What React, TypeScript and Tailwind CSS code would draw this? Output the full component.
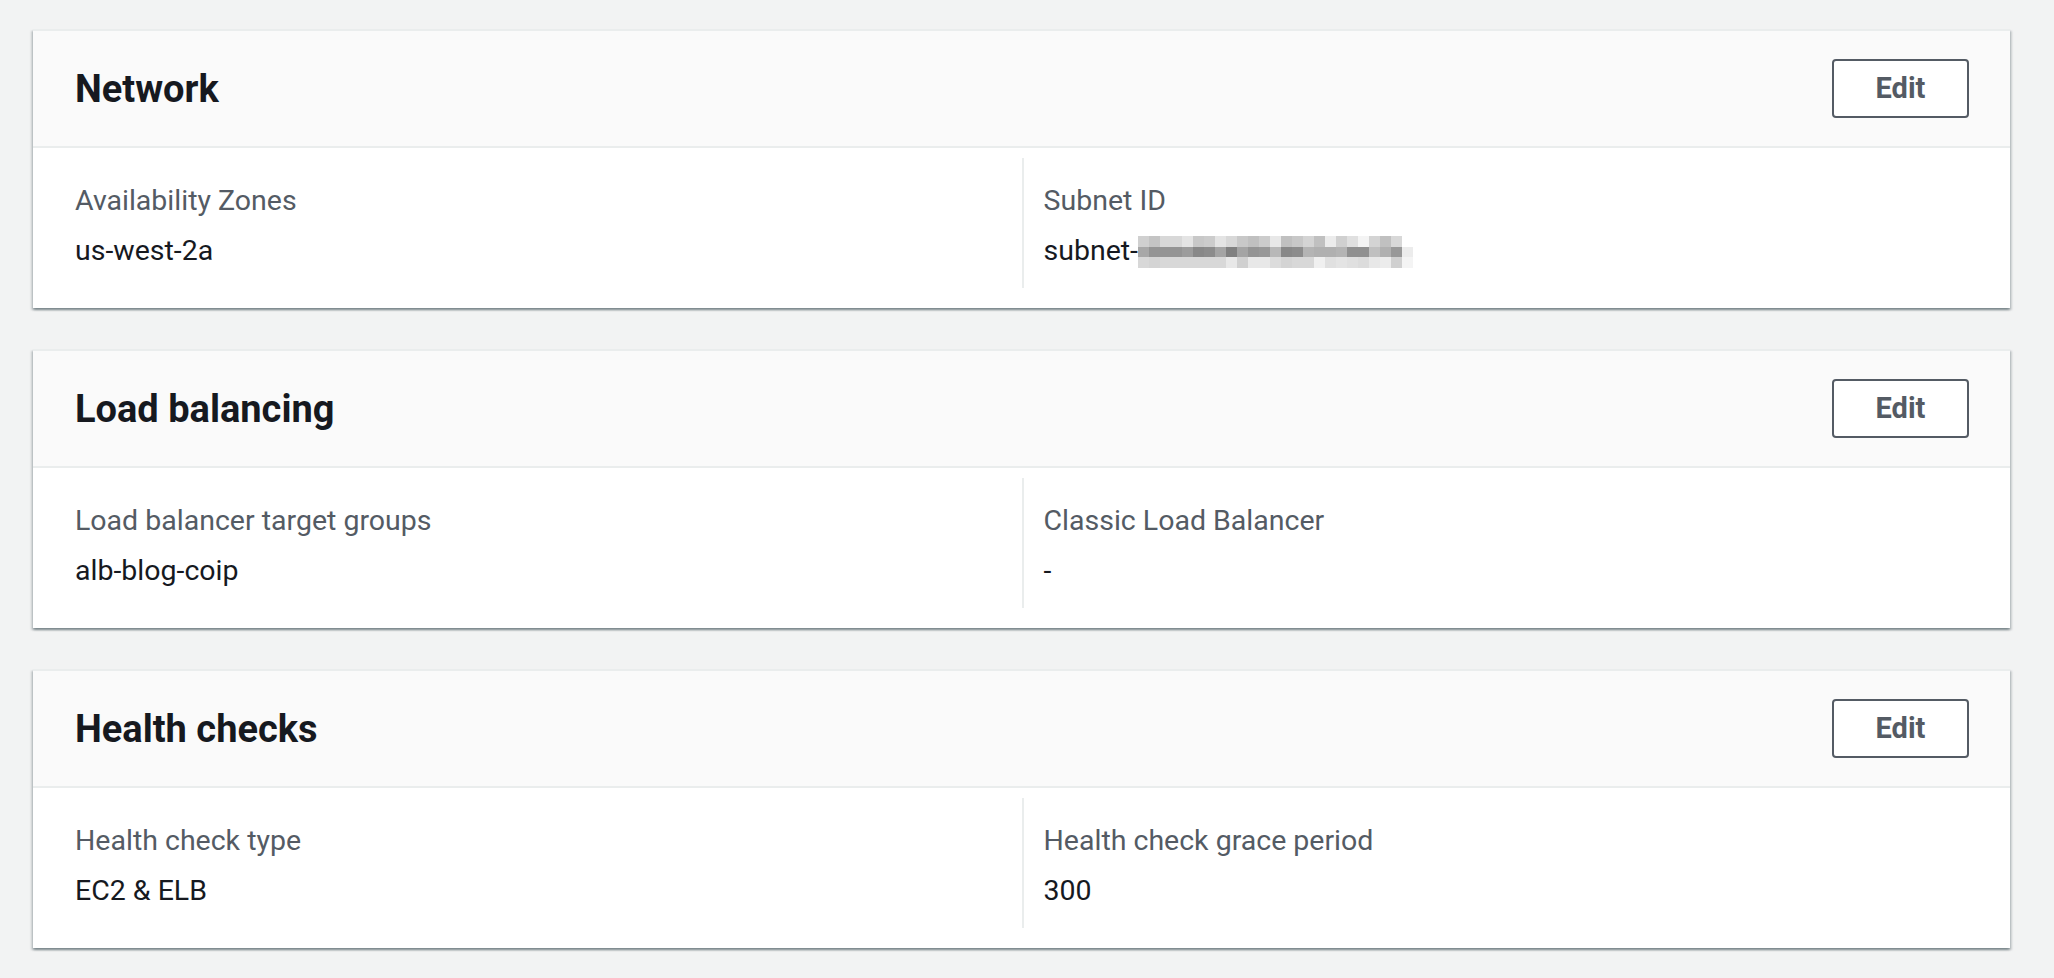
import React from "react";

type Field = { label: string; value: React.ReactNode };

type Section = { title: string; fields: [Field, Field] };

// blurred subnet id mosaic, one row per band of the pixelated image
const MOSAIC: string[][] = [
  ["d0", "c4", "d8", "d8", "e4", "c8", "cc", "e4", "d8", "c8", "c0", "cc", "e8", "c0", "c8", "d4", "c0", "ec", "d0", "e0", "f4", "d4", "c0", "d8", "ff"],
  ["a8", "94", "94", "94", "9c", "88", "8c", "a4", "80", "a4", "94", "98", "b8", "88", "8c", "b4", "b0", "b0", "b4", "90", "90", "c0", "b0", "98", "ec"],
  ["d8", "d4", "d8", "d8", "d8", "d8", "d8", "d8", "e8", "d0", "e8", "e8", "dc", "d4", "d8", "d8", "f0", "e0", "e4", "e0", "dc", "e8", "ec", "d0", "f4"],
];

const BlurredId: React.FC = () => (
  <span className="inline-flex flex-col align-top translate-y-[7px]">
    {MOSAIC.map((row, r) => (
      <span key={r} className="flex h-[10.6px]">
        {row.map((shade, c) => (
          <span
            key={c}
            className="w-[11px] h-full"
            style={{ backgroundColor: `#${shade}${shade}${shade}` }}
          />
        ))}
      </span>
    ))}
  </span>
);

const SECTIONS: Section[] = [
  {
    title: "Network",
    fields: [
      { label: "Availability Zones", value: "us-west-2a" },
      {
        label: "Subnet ID",
        value: (
          <>
            subnet-
            <BlurredId />
          </>
        ),
      },
    ],
  },
  {
    title: "Load balancing",
    fields: [
      { label: "Load balancer target groups", value: "alb-blog-coip" },
      { label: "Classic Load Balancer", value: "-" },
    ],
  },
  {
    title: "Health checks",
    fields: [
      { label: "Health check type", value: "EC2 & ELB" },
      { label: "Health check grace period", value: "300" },
    ],
  },
];

const FieldBlock: React.FC<{ field: Field }> = ({ field }) => (
  <div>
    <div className="text-[28.5px] leading-[44px] text-[#545b64] mb-[6px]">{field.label}</div>
    <div className="text-[28.5px] leading-[44px] text-[#16191f] whitespace-nowrap">{field.value}</div>
  </div>
);

const Card: React.FC<{ section: Section }> = ({ section }) => (
  <div className="bg-white border-t-2 border-[#eaeded] shadow-[0_2px_2px_0_rgba(0,28,36,0.3),2px_2px_2px_0_rgba(0,28,36,0.15),-2px_2px_2px_0_rgba(0,28,36,0.15)]">
    <div className="h-[117px] bg-[#fafafa] border-b-2 border-[#eaeded] flex items-center justify-between pl-[42px] pr-[41px]">
      <h2 className="text-[38px] leading-[44px] font-bold text-[#16191f]">{section.title}</h2>
      <button
        type="button"
        className="w-[137px] h-[59px] border-2 border-[#545b64] rounded-[4px] bg-white text-[29px] font-bold text-[#545b64] flex items-center justify-center"
      >
        Edit
      </button>
    </div>
    <div className="grid grid-cols-2 pt-[10px] pb-[20px]">
      <div className="pl-[42px] pr-[20px] pt-[21px] pb-[15px]">
        <FieldBlock field={section.fields[0]} />
      </div>
      <div className="border-l-2 border-[#eaeded] pl-[20px] pr-[20px] pt-[21px] pb-[15px]">
        <FieldBlock field={section.fields[1]} />
      </div>
    </div>
  </div>
);

const App: React.FC = () => {
  return (
    <div className="min-h-screen bg-[#f2f3f3] pl-[33px] pr-[44px] pt-[29px] pb-[30px] flex flex-col gap-[41px] font-['Roboto',sans-serif]">
      {SECTIONS.map((section) => (
        <Card key={section.title} section={section} />
      ))}
    </div>
  );
};

export default App;
